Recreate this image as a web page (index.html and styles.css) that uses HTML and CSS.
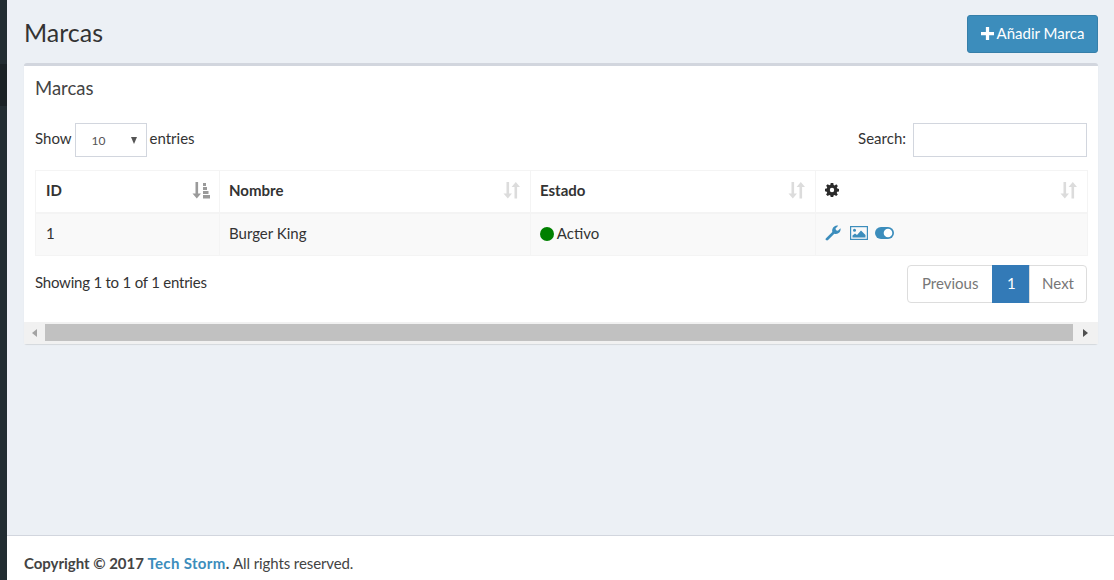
FILE: index.html
```html
<!DOCTYPE html>
<html lang="es">
<head>
<meta charset="utf-8">
<title>Marcas</title>
<link rel="stylesheet" href="styles.css">
</head>
<body>
<div class="app">
  <aside class="sidebar"><div class="side-active"></div></aside>
  <div class="main">
    <div class="content">
      <header class="page-head">
        <h1>Marcas</h1>
        <button class="btn-add" type="button">
          <svg class="ic-plus" viewBox="0 0 12 12"><path d="M4.500 0h3v4.500H12v3H7.500V12h-3V7.500H0v-3h4.500z" fill="#fff"/></svg>Añadir Marca
        </button>
      </header>
      <section class="box">
        <div class="box-body">
          <h3 class="box-title">Marcas</h3>
          <div class="dt-top">
            <label class="dt-len"><span class="lbl">Show</span><span class="fake-select"><span>10</span><i class="caret"></i></span><span class="lbl">entries</span></label>
            <label class="dt-search"><span class="lbl">Search:</span><input type="text" class="search"></label>
          </div>
          <table class="tbl">
            <colgroup><col class="c1"><col class="c2"><col class="c3"><col class="c4"></colgroup>
            <thead>
              <tr>
                <th><span class="th-in">ID
                  <svg class="sort" viewBox="0 0 18 17"><path d="M3.500 0h2.600v11.500H9L4.800 16.500.500 11.500h3z" fill="#9a9a9a"/><path d="M11 1h3v3h-3zM11 5h4v3h-4zM11 9h5.500v3H11zM11 13h7v3.500h-7z" fill="#9a9a9a"/></svg></span></th>
                <th><span class="th-in">Nombre
                  <svg class="sort" viewBox="0 0 18 17"><use href="#sort-both"/></svg></span></th>
                <th><span class="th-in">Estado
                  <svg class="sort" viewBox="0 0 18 17"><use href="#sort-both"/></svg></span></th>
                <th><span class="th-in">
                  <svg class="gear" viewBox="0 0 14 14"><path fill="#2b2b2b" fill-rule="evenodd" d="M5.700 0h2.600l.3 1.900 1.100.5L11.300 1.300l1.600 1.600-1.100 1.600.5 1.100 1.700.3v2.600l-1.800.3-.5 1.100 1.100 1.600-1.600 1.600-1.600-1.100-1.100.5-.3 1.700H5.700l-.3-1.800-1.100-.5-1.600 1.100-1.600-1.600 1.100-1.600-.5-1.100L0 8.200V5.700l1.700-.3.5-1.100-1.100-1.500 1.600-1.600 1.600 1.100 1.100-.5zM7 4.800a2.200 2.200 0 1 0 0 4.400 2.200 2.200 0 0 0 0-4.400z"/></svg>
                  <svg class="sort" viewBox="0 0 18 17"><use href="#sort-both"/></svg></span></th>
              </tr>
            </thead>
            <tbody>
              <tr>
                <td>1</td>
                <td>Burger King</td>
                <td><span class="dot"></span> Activo</td>
                <td class="actions">
                  <svg class="ic-wrench" viewBox="0 0 16 16"><path fill="#3c8dbc" d="M1 13.200 7.300 6.900C6.800 4.800 7.500 2.600 9.300 1.400 10.600.6 12 .4 13.200.8L10.500 3.400 11 5.300 12.900 5.800 15.500 3.200C15.900 5 15.200 7 13.600 8.100 12.300 9 10.700 9.200 9.300 8.800L3.100 15C2.500 15.600 1.600 15.600 1 15 .4 14.500.4 13.800 1 13.200Z"/></svg>
                  <svg class="ic-image" viewBox="0 0 18 14"><rect x=".6" y=".6" width="16.800" height="12.800" fill="none" stroke="#3c8dbc" stroke-width="1.200"/><circle cx="4.500" cy="4.200" r="1.500" fill="#3c8dbc"/><path fill="#3c8dbc" d="M2.500 11.500V9.500l2.500-2 2 1.500 4-4.500 4.500 4.500v2.500z"/></svg>
                  <svg class="ic-toggle" viewBox="0 0 19 12"><rect x="0" y="0" width="19" height="12" rx="6" fill="#3c8dbc"/><circle cx="13" cy="6" r="4.300" fill="#fff"/></svg>
                </td>
              </tr>
            </tbody>
          </table>
          <div class="dt-bottom">
            <div class="dt-info">Showing 1 to 1 of 1 entries</div>
            <ul class="pager">
              <li class="pg">Previous</li>
              <li class="pg cur">1</li>
              <li class="pg nxt">Next</li>
            </ul>
          </div>
        </div>
        <div class="scrollbar">
          <span class="arrow left"></span>
          <span class="thumb"></span>
          <span class="arrow right"></span>
        </div>
      </section>
    </div>
    <footer class="foot"><strong>Copyright © 2017 <a class="foot-link">Tech Storm</a>.</strong> <span class="foot-rest">All rights reserved.</span></footer>
  </div>
</div>
<svg class="defs" width="0" height="0"><defs><g id="sort-both" fill="#dcdcdc"><path d="M3.500 0h2.600v11.500H9L4.800 16.500.500 11.500h3z"/><path d="M11.500 16.500h2.600V5h2.900L12.800 0 8.600 5h2.900z"/></g></defs></svg>
</body>
</html>
```
FILE: styles.css
```css
* { box-sizing: border-box; }
html, body { margin: 0; padding: 0; height: 100%; }
body { font-family: "Lato", "Noto Sans", sans-serif; font-size: 15px; color: #333; background: #ecf0f5; overflow: hidden; }
.app { display: flex; height: 580px; }
.sidebar { width: 7px; background: #222d32; flex: none; padding-top: 64px; }
.side-active { height: 42px; background: #1a2226; }
.main { flex: 1; display: flex; flex-direction: column; min-width: 0; }
.content { flex: 1; padding: 15px 16px 0 17px; }
.page-head { display: flex; justify-content: space-between; align-items: flex-start; height: 48px; }
h1 { margin: 0; font-size: 25px; font-weight: 400; line-height: 34px; }
.btn-add { width: 131px; height: 38px; padding: 0 0 2px; display: flex; align-items: center; justify-content: center; background: #3c8dbc; border: 1px solid #367fa9; border-radius: 3px; color: #fff; font: inherit; font-size: 15px; }
.ic-plus { width: 13px; height: 13px; margin-right: 3px; }
.box { background: #fff; border-top: 3px solid #d2d6de; border-radius: 3px; box-shadow: 0 1px 1px rgba(0,0,0,.1); height: 281px; display: flex; flex-direction: column; }
.box-body { flex: 1; padding: 0 11px; }
.box-title { margin: 0; padding-top: 11px; font-size: 18.500px; font-weight: 400; line-height: 22px; color: #444; }
.dt-top { display: flex; justify-content: space-between; align-items: center; margin-top: 24px; height: 34px; }
.dt-len, .dt-search { display: flex; align-items: center; }
.lbl { margin-bottom: 4px; }
.fake-select { width: 72px; height: 34px; margin: 0 3px; border: 1px solid #d2d6de; display: flex; align-items: center; justify-content: space-between; padding: 1px 9px 0 16px; font-size: 12px; color: #555; }
.caret { width: 0; height: 0; border-left: 3.500px solid transparent; border-right: 3.500px solid transparent; border-top: 7px solid #555; }
.search { width: 174px; height: 34px; margin-left: 7px; border: 1px solid #d2d6de; padding: 0 12px; outline: none; }
.tbl { width: 1052px; table-layout: fixed; border-collapse: collapse; margin-top: 13px; }
.c1 { width: 184px; } .c2 { width: 311px; } .c3 { width: 285px; } .c4 { width: 272px; }
.tbl th, .tbl td { border: 1px solid #f4f4f4; text-align: left; padding: 0 10px 2px 9px; }
.tbl th:first-child, .tbl td:first-child { padding-left: 10px; }
.tbl th { height: 42px; border-bottom-width: 2px; font-weight: 700; color: #333; }
.tbl td { height: 43px; background: #f9f9f9; }
.th-in { display: flex; justify-content: space-between; align-items: center; }
.sort { width: 18px; height: 17px; margin-right: -1px; }
.gear { width: 14px; height: 14px; }
.dot { display: inline-block; width: 14px; height: 14px; border-radius: 50%; background: green; vertical-align: -2px; margin-right: -.5px; }
.actions { font-size: 0; }
.actions svg { vertical-align: middle; }
.ic-wrench { width: 16px; height: 16px; margin-right: 9px; }
.ic-image { width: 18px; height: 14px; margin-right: 7px; }
.ic-toggle { width: 19px; height: 12px; }
.dt-bottom { display: flex; justify-content: space-between; align-items: flex-start; margin-top: 9px; }
.dt-info { padding-top: 7px; line-height: 20px; letter-spacing: -.22px; }
.pager { list-style: none; margin: 0; padding: 0; display: flex; height: 38px; }
.pg { display: flex; align-items: center; padding: 0 14px 2px; border: 1px solid #ddd; margin-left: -1px; color: #777; }
.pg:first-child { border-radius: 4px 0 0 4px; }
.pg:last-child { border-radius: 0 4px 4px 0; }
.pg.cur { background: #337ab7; border-color: #337ab7; color: #fff; padding: 0 13.500px 2px; }
.pg.nxt { padding: 0 12px 2px; }
.scrollbar { height: 22px; background: #f1f1f1; display: flex; align-items: center; padding: 2px 0 3px; }
.thumb { flex: 1; height: 17px; background: #c1c1c1; }
.arrow { width: 21px; flex: none; display: flex; justify-content: center; }
.arrow.left::before { content: ""; border-top: 4.500px solid transparent; border-bottom: 4.500px solid transparent; border-right: 5px solid #a3a3a3; }
.arrow.right { width: 25px; }
.arrow.right::before { content: ""; border-top: 4.500px solid transparent; border-bottom: 4.500px solid transparent; border-left: 5px solid #505050; }
.foot { height: 45px; background: #fff; border-top: 1px solid #d2d6de; padding: 0 17px; line-height: 55px; color: #444; }
.foot strong { letter-spacing: -.03px; }
.foot-link { color: #3c8dbc; letter-spacing: .35px; }
.foot-rest { letter-spacing: -.1px; }
.defs { position: absolute; }
```
